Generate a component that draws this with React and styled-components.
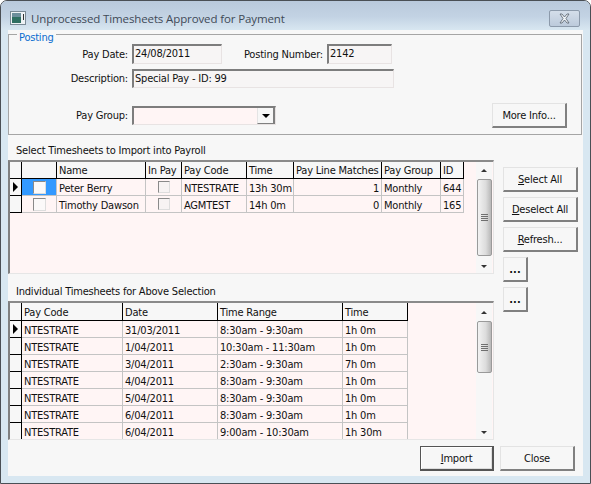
import React from "react";
import styled, { createGlobalStyle } from "styled-components";

const Global = createGlobalStyle`
  html, body { margin: 0; padding: 0; background: #fff; }
  * { box-sizing: border-box; }
`;

const Win = styled.div`
  width: 591px; height: 484px; display: flex; flex-direction: column;
  border: 1px solid #4a4f55; border-radius: 7px 7px 0 0; overflow: hidden;
  background: #d8e7f1;
  font-family: "DejaVu Sans", "Liberation Sans", sans-serif; font-stretch: condensed; font-size: 11px; letter-spacing: -0.2px; color: #111;
`;
const TitleBar = styled.div`
  height: 29px; flex: none; display: flex; align-items: center; padding: 5px 10px 0 9px;
  background: linear-gradient(#b9c9dc, #c3d3e4 55%, #d8e7f1);
`;
const TitleText = styled.div`
  margin-left: 5px; flex: 1; font-family: "Open Sans", sans-serif; font-stretch: normal; letter-spacing: -0.12px; font-size: 11.5px; color: #3f4a57;
`;
const CloseX = styled.div`
  width: 31px; height: 17px; border: 1px solid #8c9aab; border-radius: 2px;
  display: flex; align-items: center; justify-content: center;
  background: linear-gradient(#d4deea, #bccadb);
`;
const Body = styled.div`
  width: 575px; height: 446px; margin-left: 7px; background: #f7f7f7; display: flex; flex-direction: column; padding-right: 2px;
`;
const Group = styled.div`
  position: relative; margin-top: 4px; height: 101px; width: 574px; flex: none;
  border: 1px solid #a5a5a5; padding: 9px 14px 0 0;
  display: flex; flex-direction: column;
`;
const Legend = styled.div`
  position: absolute; left: 8px; top: -4px; padding: 0 2px; background: #f7f7f7; color: #0a6ccf; line-height: 14px;
`;
const FieldRow = styled.div`
  display: flex; align-items: center; height: ${p => p.$h}px; margin-top: ${p => p.$mt || 0}px;
`;
const Label = styled.div`
  width: ${p => p.$w}px; text-align: right; padding-right: ${p => p.$pr ?? 4}px; white-space: nowrap; flex: none;
`;
const Input = styled.div`
  width: ${p => p.$w}px; height: ${p => p.$h}px; flex: none; padding-left: 1px; line-height: 16px; white-space: nowrap;
  border-top: 2px solid #7d7d7d; border-left: 2px solid #7d7d7d;
  border-right: 1px solid #e8e3e3; border-bottom: 1px solid #e8e3e3;
  background: ${p => p.$bg || "#f7f5f5"};
`;
const Combo = styled(Input)`
  display: flex; justify-content: flex-end; padding: 0;
`;
const ComboBtn = styled.div`
  width: 18px; height: 100%; background: #f7f7f7; display: flex; align-items: center; justify-content: center;
  border-left: 1px solid #e4e4e4; border-right: 2px solid #808080; border-bottom: 1px solid #808080;
`;
const Caret = styled.div`
  width: 0; height: 0; border-left: 4px solid transparent; border-right: 4px solid transparent; border-top: 4px solid #000;
`;
const Spacer = styled.div`flex: 1;`;
const Btn = styled.button`
  width: ${p => p.$w || 75}px; height: 25px; flex: none; padding: 1px 0 0; font: inherit; letter-spacing: inherit; color: #111; background: #f7f7f7;
  border-style: solid; border-width: 1px 2px 2px 1px; border-color: #e3e3e3 #808080 #808080 #e3e3e3;
  display: flex; align-items: center; justify-content: center;
  u { text-decoration: underline; }
`;
const DefaultBtn = styled(Btn)`
  border: 1px solid #555; border-right-width: 2px; border-bottom-width: 2px;
  box-shadow: inset 1px 1px 0 #fff, inset -1px -1px 0 #ddd;
`;
const Dots = styled.span`font-weight: bold; letter-spacing: 0;`;
const Middle = styled.div`display: flex; flex: none;`;
const LeftCol = styled.div`width: 486px; flex: none; margin-left: 0;`;
const RightCol = styled.div`
  margin-left: 9px; margin-top: 32px; display: flex; flex-direction: column; gap: 5px;
`;
const SectionTitle = styled.div`
  height: ${p => p.$h}px; padding-left: 8px; display: flex; align-items: center; padding-top: ${p => p.$pt}px;
`;
const Frame = styled.div`
  height: ${p => p.$h}px; display: flex; background: #fff5f5; padding-right: 1px;
  border-top: 2px solid #8a8a8a; border-left: 2px solid #808080; border-right: 1px solid #e6e6e6; border-bottom: 1px solid #e6e6e6;
`;
const GridClip = styled.div`flex: 1; overflow: hidden;`;
const Table = styled.table`
  table-layout: fixed; border-collapse: separate; border-spacing: 0; width: ${p => p.$w}px;
`;
const Th = styled.th`
  height: ${p => p.$h || 17}px; padding: 1px 0 0 2px; font-weight: normal; text-align: left; background: #f7f7f7; white-space: nowrap; overflow: hidden;
  border-right: 1px solid #000; border-bottom: 1px solid #000;
`;
const Td = styled.td`
  height: 17px; padding: 2px ${p => (p.$right ? 2 : 0)}px 0 2px; text-align: ${p => (p.$right ? "right" : "left")}; white-space: nowrap; overflow: hidden;
  border-right: 1px solid #c4c4c4; border-bottom: 1px solid #c4c4c4;
  background: ${p => (p.$sel ? "#3399ff" : "transparent")};
`;
const CheckTd = styled(Td)`padding: 0;`;
const Ind = styled.td`
  height: 17px; padding: 0 0 0 3px; background: #f7f7f7; border-right: 1px solid #000; border-bottom: 1px solid #000;
`;
const Arrow = styled.div`
  width: 0; height: 0; border-top: 5px solid transparent; border-bottom: 5px solid transparent; border-left: 5px solid #000;
`;
const CheckWrap = styled.div`display: flex; justify-content: center;`;
const Check = styled.div`
  width: ${p => p.$w ? 13 : 12}px; height: ${p => p.$w ? 13 : 12}px; background: ${p => p.$w ? "#fbf9f9" : "#f7f3f3"};
  border-style: solid; border-width: 1px; border-color: #8a8a8a #ddd #ddd #8a8a8a;
`;
const SBar = styled.div`
  width: 16px; flex: none; margin-left: auto; margin-right: 0; background: #f7f7f7; display: flex; flex-direction: column; align-items: center; position: relative;
`;
const SArrow = styled.div`
  height: ${p => p.$h}px; flex: none; width: 100%; display: flex; align-items: center; justify-content: center;
`;
const UpTri = styled.div`
  width: 0; height: 0; border-left: 3px solid transparent; border-right: 3px solid transparent; border-bottom: 3px solid #333;
`;
const DownTri = styled.div`
  width: 0; height: 0; border-left: 3px solid transparent; border-right: 3px solid transparent; border-top: 3px solid #333;
`;
const Thumb = styled.div`
  width: 15px; height: ${p => p.$h}px; flex: none; border: 1px solid #9a9a9a; border-radius: 2px;
  background: linear-gradient(90deg, #f2f2f2, #dcdcdc 60%, #b8b8b8);
  display: flex; align-items: center; justify-content: center;
`;
const Grip = styled.div`
  width: 7px; height: 7px; margin-left: 0;
  background: repeating-linear-gradient(#6f6f6f 0 1px, transparent 1px 2px);
`;
const Footer = styled.div`
  display: flex; justify-content: flex-end; gap: 6px; padding-right: 6px; margin-top: 6px;
`;
const Grow = styled.div`flex: 1;`;

const Scroll = ({ top, thumb }) => (
  <SBar>
    <SArrow $h={top}><UpTri /></SArrow>
    <Thumb $h={thumb}><Grip /></Thumb>
    <Grow />
    <SArrow $h={14}><DownTri /></SArrow>
  </SBar>
);

const cols1 = [12, 35, 89, 36, 65, 47, 88, 59, 23];
const cols2 = [12, 101, 95, 125, 65];
const sum = a => a.reduce((x, y) => x + y, 0);
const Cols = ({ w }) => <colgroup>{w.map((x, i) => <col key={i} style={{ width: x }} />)}</colgroup>;

const rows1 = [
  ["Peter Berry", "NTESTRATE", "13h 30m", "1", "Monthly", "644"],
  ["Timothy Dawson", "AGMTEST", "14h 0m", "0", "Monthly", "165"],
];
const rows2 = [
  ["31/03/2011", "8:30am - 9:30am", "1h 0m"],
  ["1/04/2011", "10:30am - 11:30am", "1h 0m"],
  ["3/04/2011", "2:30am - 9:30am", "7h 0m"],
  ["4/04/2011", "8:30am - 9:30am", "1h 0m"],
  ["5/04/2011", "8:30am - 9:30am", "1h 0m"],
  ["6/04/2011", "8:30am - 9:30am", "1h 0m"],
  ["6/04/2011", "9:00am - 10:30am", "1h 30m"],
];

export default function App() {
  return (
    <Win>
      <Global />
      <TitleBar>
        <svg width="16" height="14" viewBox="0 0 16 14">
          <rect x="0.5" y="0.5" width="15" height="13" fill="#eef2f5" stroke="#7a8a96" />
          <rect x="2" y="2" width="9" height="10" fill="#2f6f62" />
          <rect x="2" y="2" width="9" height="4" fill="#6d8f9c" />
          <rect x="13" y="3" width="1" height="6" fill="#333" />
        </svg>
        <TitleText>Unprocessed Timesheets Approved for Payment</TitleText>
        <CloseX>
          <svg width="13" height="11" viewBox="0 0 13 11">
            <path d="M2 1h2l2.500 3L9 1h2L8 5.500 11 10H9L6.500 7 4 10H2l3-4.500z" fill="#eef2f6" stroke="#56606c" strokeWidth="0.8" />
          </svg>
        </CloseX>
      </TitleBar>
      <Body>
        <Group>
          <Legend>Posting</Legend>
          <FieldRow $h={20}>
            <Label $w={123}>Pay Date:</Label>
            <Input $w={90} $h={20}>24/08/2011</Input>
            <Label $w={105} $pr={4}>Posting Number:</Label>
            <Input $w={65} $h={20}>2142</Input>
          </FieldRow>
          <FieldRow $h={19} $mt={5}>
            <Label $w={123}>Description:</Label>
            <Input $w={262} $h={19}>Special Pay - ID: 99</Input>
          </FieldRow>
          <FieldRow $h={25} $mt={15}>
            <Label $w={123}>Pay Group:</Label>
            <Combo $w={144} $h={19} $bg="#fff5f5"><ComboBtn><Caret /></ComboBtn></Combo>
            <Spacer />
            <Btn>More Info...</Btn>
          </FieldRow>
        </Group>
        <Middle>
          <LeftCol>
            <SectionTitle $h={25} $pt={6}>Select Timesheets to Import into Payroll</SectionTitle>
            <Frame $h={114}>
              <GridClip>
                <Table $w={sum(cols1)}>
                  <Cols w={cols1} />
                  <thead>
                    <tr>
                      <Th /><Th /><Th>Name</Th><Th>In Pay</Th><Th>Pay Code</Th><Th>Time</Th><Th>Pay Line Matches</Th><Th>Pay Group</Th><Th>ID</Th>
                    </tr>
                  </thead>
                  <tbody>
                    {rows1.map((r, i) => (
                      <tr key={r[0]}>
                        <Ind>{i === 0 && <Arrow />}</Ind>
                        <CheckTd $sel={i === 0}><CheckWrap><Check $w /></CheckWrap></CheckTd>
                        <Td>{r[0]}</Td>
                        <CheckTd><CheckWrap><Check /></CheckWrap></CheckTd>
                        <Td>{r[1]}</Td>
                        <Td>{r[2]}</Td>
                        <Td $right>{r[3]}</Td>
                        <Td>{r[4]}</Td>
                        <Td $right>{r[5]}</Td>
                      </tr>
                    ))}
                  </tbody>
                </Table>
              </GridClip>
              <Scroll top={17} thumb={77} />
            </Frame>
            <SectionTitle $h={27} $pt={8}>Individual Timesheets for Above Selection</SectionTitle>
            <Frame $h={139}>
              <GridClip>
                <Table $w={sum(cols2)}>
                  <Cols w={cols2} />
                  <thead>
                    <tr>
                      <Th $h={18} /><Th $h={18}>Pay Code</Th><Th $h={18}>Date</Th><Th $h={18}>Time Range</Th><Th $h={18}>Time</Th>
                    </tr>
                  </thead>
                  <tbody>
                    {rows2.map((r, i) => (
                      <tr key={i}>
                        <Ind>{i === 0 && <Arrow />}</Ind>
                        <Td>NTESTRATE</Td>
                        <Td>{r[0]}</Td>
                        <Td>{r[1]}</Td>
                        <Td>{r[2]}</Td>
                      </tr>
                    ))}
                  </tbody>
                </Table>
              </GridClip>
              <Scroll top={18} thumb={52} />
            </Frame>
          </LeftCol>
          <RightCol>
            <Btn><span><u>S</u>elect All</span></Btn>
            <Btn><span><u>D</u>eselect All</span></Btn>
            <Btn><span><u>R</u>efresh...</span></Btn>
            <Btn $w={25}><Dots>...</Dots></Btn>
            <Btn $w={25}><Dots>...</Dots></Btn>
          </RightCol>
        </Middle>
        <Footer>
          <DefaultBtn $w={74}><span><u>I</u>mport</span></DefaultBtn>
          <Btn>Close</Btn>
        </Footer>
      </Body>
    </Win>
  );
}
